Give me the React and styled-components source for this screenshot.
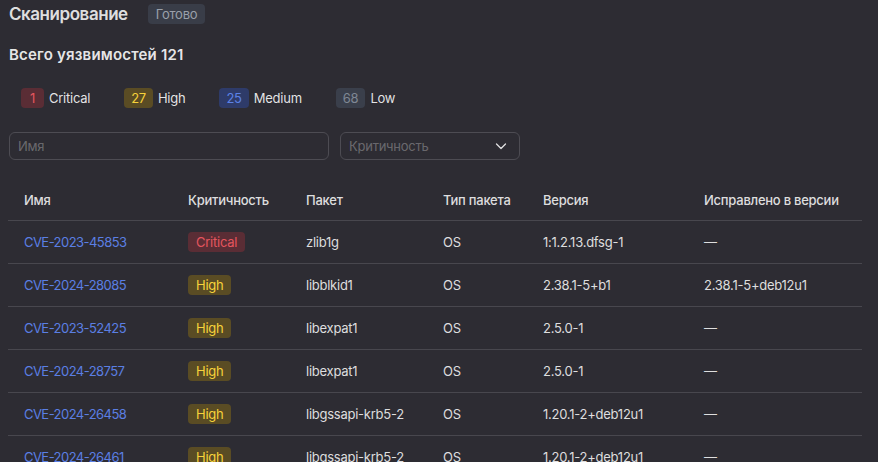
import React from "react";
import styled, { createGlobalStyle } from "styled-components";

const Global = createGlobalStyle`
  html, body { margin: 0; padding: 0; background: #2d2c33; }
  body {
    font-family: Inter, "Noto Sans", sans-serif;
    color: rgba(255,255,255,0.85);
    font-size: 13px;
    letter-spacing: -0.25px;
    font-variant-numeric: proportional-nums;
  }
`;

const Page = styled.div`
  padding: 0 8px;
  width: 862px;
  box-sizing: border-box;
`;

const TitleRow = styled.div`
  display: flex;
  align-items: center;
  gap: 20px;
  height: 28px;
`;

const Title = styled.h1`
  margin: 0 0 0 1px;
  font-size: 17px;
  font-weight: 600;
  line-height: 24px;
  letter-spacing: -0.45px;
  color: rgba(255,255,255,0.86);
`;

const Label = styled.span`
  display: inline-flex;
  align-items: center;
  justify-content: center;
  height: 20px;
  padding: 0 ${(p) => (p.$pad ?? 8)}px;
  min-width: ${(p) => p.$min || 0}px;
  box-sizing: border-box;
  border-radius: 4px;
  font-size: 13px;
  line-height: 20px;
  background: ${(p) => p.$bg};
  color: ${(p) => p.$fg};
`;

const Subtitle = styled.h2`
  margin: 17px 0 0 1px;
  font-size: 15px;
  font-weight: 600;
  line-height: 20px;
  letter-spacing: 0.2px;
  color: rgba(255,255,255,0.9);
`;

const Legend = styled.div`
  display: flex;
  align-items: center;
  gap: 34px;
  margin-top: 23px;
  padding-left: 13px;
  height: 20px;
`;

const LegendItem = styled.div`
  display: flex;
  align-items: center;
  gap: 5px;
  font-size: 13px;
  color: rgba(255,255,255,0.88);
`;

const Filters = styled.div`
  display: flex;
  gap: 11px;
  margin-top: 24px;
  padding-left: 1px;
`;

const Input = styled.div`
  box-sizing: border-box;
  width: ${(p) => p.$w}px;
  height: 28px;
  border: 1px solid #4d4c53;
  border-radius: 6px;
  display: flex;
  align-items: center;
  justify-content: space-between;
  padding: 0 12px 0 8px;
  color: rgba(255,255,255,0.3);
  font-size: 13px;
`;

const Table = styled.table`
  margin-top: 20px;
  border-collapse: collapse;
  width: 854px;
  table-layout: fixed;
`;

const Th = styled.th`
  text-align: left;
  font-weight: 500;
  font-size: 13px;
  color: rgba(255,255,255,0.85);
  height: 40px;
  padding: 0 16px;
  border-bottom: 1px solid #48474e;
  box-sizing: border-box;
  white-space: nowrap;
`;

const Td = styled.td`
  height: 42px;
  padding: 0 16px;
  border-bottom: 1px solid #48474e;
  font-size: 13px;
  color: rgba(255,255,255,0.85);
  white-space: nowrap;
`;

const Link = styled.a`
  color: #5b7fe3;
  text-decoration: none;
  letter-spacing: -0.55px;
`;

const sev = {
  Critical: { bg: "#5a2d35", fg: "#e5555e" },
  High: { bg: "#5a4c24", fg: "#f6d23a" },
  Medium: { bg: "#2e3b69", fg: "#5c82e6" },
  Low: { bg: "#3a3f4b", fg: "#7f8794" },
};

const rows = [
  ["CVE-2023-45853", "Critical", "zlib1g", "OS", "1:1.2.13.dfsg-1", "—"],
  ["CVE-2024-28085", "High", "libblkid1", "OS", "2.38.1-5+b1", "2.38.1-5+deb12u1"],
  ["CVE-2023-52425", "High", "libexpat1", "OS", "2.5.0-1", "—"],
  ["CVE-2024-28757", "High", "libexpat1", "OS", "2.5.0-1", "—"],
  ["CVE-2024-26458", "High", "libgssapi-krb5-2", "OS", "1.20.1-2+deb12u1", "—"],
  ["CVE-2024-26461", "High", "libgssapi-krb5-2", "OS", "1.20.1-2+deb12u1", "—"],
];

const widths = [164, 118, 137, 100, 161, 174];
const heads = ["Имя", "Критичность", "Пакет", "Тип пакета", "Версия", "Исправлено в версии"];

const Chevron = () => (
  <svg width="12" height="12" viewBox="0 0 12 12" fill="none">
    <path d="M1.5 4l4.5 4.5L10.5 4" stroke="rgba(255,255,255,0.85)" strokeWidth="1.3" strokeLinecap="round" strokeLinejoin="round" />
  </svg>
);

export default function App() {
  return (
    <Page>
      <Global />
      <TitleRow>
        <Title>Сканирование</Title>
        <Label $bg="#393d48" $fg="#9aa0aa">Готово</Label>
      </TitleRow>
      <Subtitle>Всего уязвимостей 121</Subtitle>
      <Legend>
        <LegendItem><Label $bg={sev.Critical.bg} $fg={sev.Critical.fg} $pad={7} $min={23}>1</Label>Critical</LegendItem>
        <LegendItem><Label $bg={sev.High.bg} $fg={sev.High.fg} $pad={7}>27</Label>High</LegendItem>
        <LegendItem><Label $bg={sev.Medium.bg} $fg={sev.Medium.fg} $pad={7}>25</Label>Medium</LegendItem>
        <LegendItem><Label $bg={sev.Low.bg} $fg={sev.Low.fg} $pad={7}>68</Label>Low</LegendItem>
      </Legend>
      <Filters>
        <Input $w={320}>Имя</Input>
        <Input $w={180}>Критичность<Chevron /></Input>
      </Filters>
      <Table>
        <colgroup>
          {widths.map((w, i) => <col key={i} style={{ width: w }} />)}
        </colgroup>
        <thead>
          <tr>{heads.map((h) => <Th key={h}>{h}</Th>)}</tr>
        </thead>
        <tbody>
          {rows.map((r, i) => (
            <tr key={i}>
              <Td><Link href="#">{r[0]}</Link></Td>
              <Td><Label $bg={sev[r[1]].bg} $fg={sev[r[1]].fg}>{r[1]}</Label></Td>
              <Td>{r[2]}</Td>
              <Td>{r[3]}</Td>
              <Td>{r[4]}</Td>
              <Td>{r[5]}</Td>
            </tr>
          ))}
        </tbody>
      </Table>
    </Page>
  );
}
